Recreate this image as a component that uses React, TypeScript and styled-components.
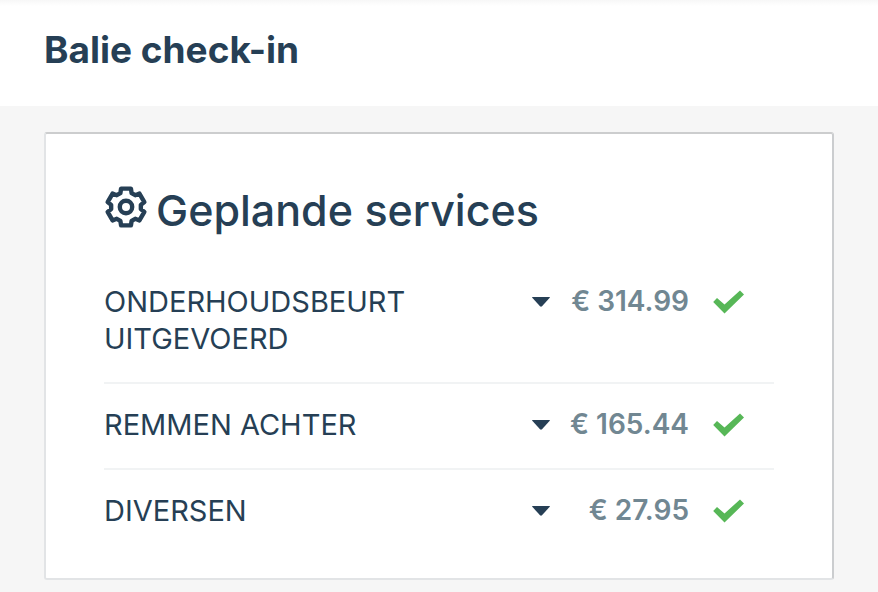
import React from "react";
import styled, { createGlobalStyle } from "styled-components";

const GlobalStyle = createGlobalStyle`
  * { box-sizing: border-box; }
  body {
    margin: 0;
    background: #f6f6f6;
    color: #263f55;
    font-family: Inter, "Open Sans", sans-serif;
  }
`;

const Header = styled.header`
  padding: 23px 44px 29px;
  background: linear-gradient(#f7f7f7, #ffffff 6px);
`;

const PageTitle = styled.h1`
  margin: 0;
  font-size: 37px;
  font-weight: 700;
  line-height: 54px;
`;

const Main = styled.main`
  padding: 26px 44px 12px;
`;

const Card = styled.section`
  padding: 48px 58px 24px;
  background: #ffffff;
  border: 2px solid #e2e4e6;
  border-top-color: #cccdce;
  border-right-color: #cbcdcf;
  border-radius: 3px;
`;

const CardTitle = styled.h2`
  display: flex;
  align-items: center;
  gap: 8px;
  margin: 0 0 23px;
  font-size: 43px;
  font-weight: 500;
  line-height: 56px;
`;

const GearSvg = styled.svg`
  flex: none;
  width: 44px;
  height: 44px;
  margin: 0 0 6px 0;
`;

const ServiceList = styled.ul`
  margin: 0;
  padding: 0;
  list-style: none;
`;

const ServiceRow = styled.li`
  display: flex;
  align-items: flex-start;
  padding: 22px 30px 25px 0;

  & + & {
    border-top: 2px solid #f1f3f4;
  }
`;

const ServiceName = styled.span`
  flex: 1;
  padding-right: 80px;
  font-size: 29px;
  line-height: 37px;
  text-transform: uppercase;
`;

const ToggleButton = styled.button`
  display: flex;
  align-items: center;
  height: 37px;
  margin: 0;
  padding: 0;
  border: 0;
  background: none;
  color: inherit;
  cursor: pointer;
`;

const Price = styled.span`
  width: 138px;
  color: #718792;
  font-size: 28px;
  font-weight: 600;
  line-height: 37px;
  text-align: right;
  white-space: nowrap;
`;

const CheckSvg = styled.svg`
  width: 32px;
  height: 24px;
  margin: 7px 0 0 23px;
`;

const toothPoints = Array.from({ length: 6 }, (_, i) => i * 60 - 90)
  .flatMap((angle) => [
    [angle - 22, 15],
    [angle - 15, 19],
    [angle + 15, 19],
    [angle + 22, 15],
  ])
  .map(([deg, radius]) => {
    const rad = (deg * Math.PI) / 180;
    return `${(22 + radius * Math.cos(rad)).toFixed(2)},${(22 + radius * Math.sin(rad)).toFixed(2)}`;
  })
  .join(" ");

const Gear = () => (
  <GearSvg viewBox="0 0 44 44" fill="none" stroke="currentColor" strokeWidth="4.4" strokeLinejoin="round" aria-hidden="true">
    <polygon points={toothPoints} />
    <circle cx="22" cy="22" r="6.2" />
  </GearSvg>
);

const Caret = () => (
  <svg width="20" height="12" viewBox="0 0 20 12" aria-hidden="true">
    <path d="M1.5 1h17q.8 0 .2.8L11 10.2q-1 .9-2 0L1.3 1.8Q.7 1 1.5 1Z" fill="currentColor" />
  </svg>
);

const Check = () => (
  <CheckSvg viewBox="0 0 32 24" role="img" aria-label="Akkoord">
    <path d="M1.2 12 5 8 12.5 14.5 28 .5 32 4.5 12.5 23.6Z" fill="#57b757" />
  </CheckSvg>
);

const services = [
  { name: "Onderhoudsbeurt uitgevoerd", price: "€ 314.99" },
  { name: "Remmen achter", price: "€ 165.44" },
  { name: "Diversen", price: "€ 27.95" },
];

export default function App() {
  return (
    <>
      <GlobalStyle />
      <Header>
        <PageTitle>Balie check-in</PageTitle>
      </Header>
      <Main>
        <Card>
          <CardTitle>
            <Gear />
            Geplande services
          </CardTitle>
          <ServiceList>
            {services.map(({ name, price }) => (
              <ServiceRow key={name}>
                <ServiceName>{name}</ServiceName>
                <ToggleButton type="button" aria-label={`Toon details van ${name}`}>
                  <Caret />
                </ToggleButton>
                <Price>{price}</Price>
                <Check />
              </ServiceRow>
            ))}
          </ServiceList>
        </Card>
      </Main>
    </>
  );
}
